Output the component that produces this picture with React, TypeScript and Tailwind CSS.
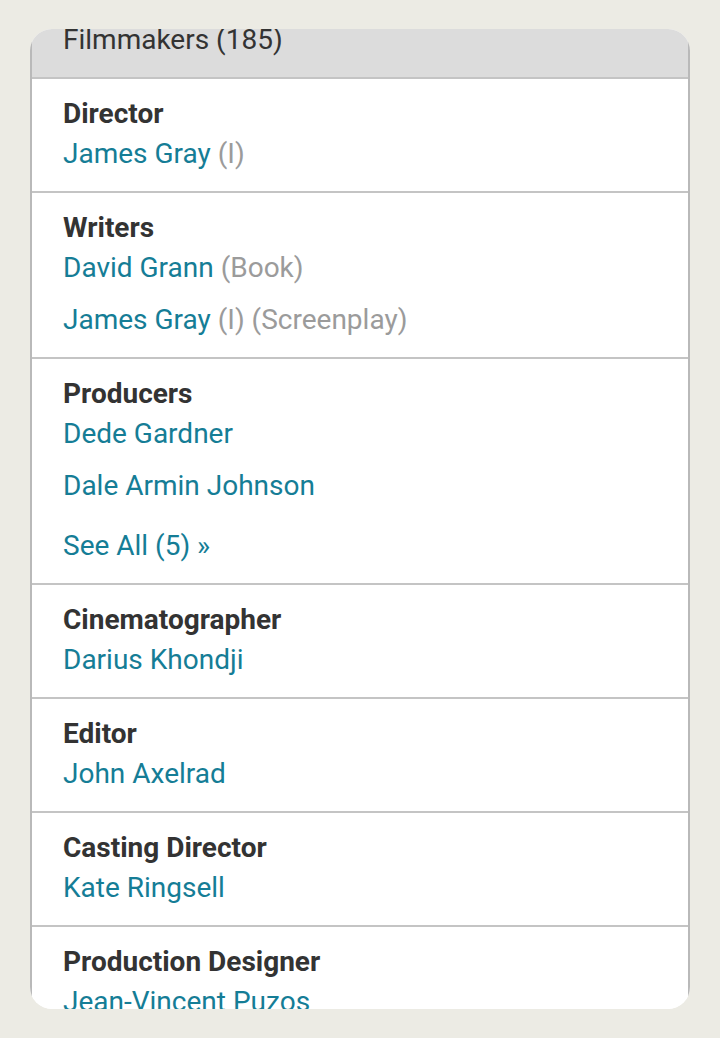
import React from "react";

type Credit = { name: string; notes?: string };
type Group = { role: string; credits: Credit[]; more?: string };

const groups: Group[] = [
  { role: "Director", credits: [{ name: "James Gray", notes: "(I)" }] },
  {
    role: "Writers",
    credits: [
      { name: "David Grann", notes: "(Book)" },
      { name: "James Gray", notes: "(I) (Screenplay)" },
    ],
  },
  {
    role: "Producers",
    credits: [{ name: "Dede Gardner" }, { name: "Dale Armin Johnson" }],
    more: "See All (5) »",
  },
  { role: "Cinematographer", credits: [{ name: "Darius Khondji" }] },
  { role: "Editor", credits: [{ name: "John Axelrad" }] },
  { role: "Casting Director", credits: [{ name: "Kate Ringsell" }] },
  { role: "Production Designer", credits: [{ name: "Jean-Vincent Puzos" }] },
];

function CreditGroup({ group }: { group: Group }) {
  return (
    <section className="border-t-2 border-[#c4c4c4] bg-white pl-[31px] pr-4 pt-[15px] pb-[17px]">
      <h3 className="text-[28px] leading-[40px] font-bold text-[#333333]">{group.role}</h3>
      <ul className="flex flex-col gap-[12px]">
        {group.credits.map((c, i) => (
          <li key={i} className="text-[28px] leading-[40px]">
            <a className="text-[#157d96]">{c.name}</a>
            {c.notes && <span className="text-[#9b9b9b]"> {c.notes}</span>}
          </li>
        ))}
      </ul>
      {group.more && (
        <a className="mt-[20px] block text-[28px] leading-[40px] text-[#157d96]">{group.more}</a>
      )}
    </section>
  );
}

export default function App() {
  return (
    <div
      className="h-[1038px] w-[720px] bg-[#ecebe4] pt-[29px]"
      style={{ fontFamily: "Roboto, 'Noto Sans', sans-serif" }}
    >
      <div className="mx-[30px] h-[980px] overflow-hidden rounded-[22px]">
        <div className="h-full border-x-2 border-[#b9b9b9] bg-white">
          <div className="h-[48px] overflow-hidden bg-[#dcdcdc] pl-[31px]">
            <h2 className="-mt-[4px] text-[28px] leading-[30px] text-[#333333]">Filmmakers (185)</h2>
          </div>
          {groups.map((g) => (
            <CreditGroup key={g.role} group={g} />
          ))}
        </div>
      </div>
    </div>
  );
}
